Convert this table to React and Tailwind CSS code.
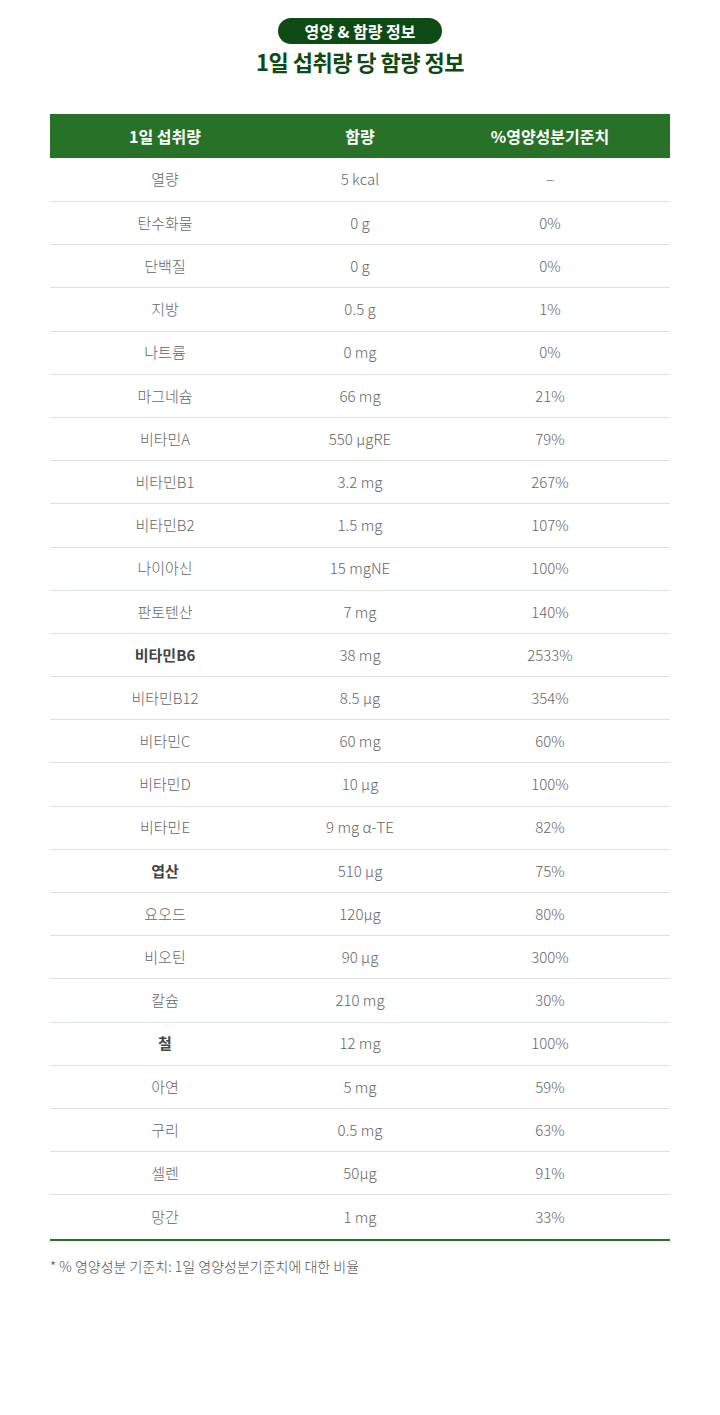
import React from 'react';

const rows = [
  ['열량', '5 kcal', '–'],
  ['탄수화물', '0 g', '0%'],
  ['단백질', '0 g', '0%'],
  ['지방', '0.5 g', '1%'],
  ['나트륨', '0 mg', '0%'],
  ['마그네슘', '66 mg', '21%'],
  ['비타민A', '550 μgRE', '79%'],
  ['비타민B1', '3.2 mg', '267%'],
  ['비타민B2', '1.5 mg', '107%'],
  ['나이아신', '15 mgNE', '100%'],
  ['판토텐산', '7 mg', '140%'],
  ['비타민B6', '38 mg', '2533%', true],
  ['비타민B12', '8.5 μg', '354%'],
  ['비타민C', '60 mg', '60%'],
  ['비타민D', '10 μg', '100%'],
  ['비타민E', '9 mg α-TE', '82%'],
  ['엽산', '510 μg', '75%', true],
  ['요오드', '120µg', '80%'],
  ['비오틴', '90 μg', '300%'],
  ['칼슘', '210 mg', '30%'],
  ['철', '12 mg', '100%', true],
  ['아연', '5 mg', '59%'],
  ['구리', '0.5 mg', '63%'],
  ['셀렌', '50µg', '91%'],
  ['망간', '1 mg', '33%'],
];

const font = { fontFamily: '"Noto Sans CJK KR", "Noto Sans", sans-serif' };

export default function App() {
  return (
    <div className="w-[720px] min-h-[1415px] bg-white" style={font}>
      {/* title */}
      <div className="flex flex-col items-center pt-[18px]">
        <div className="h-[26px] w-[164px] rounded-full bg-[#0e4a13] flex items-center justify-center text-white text-[16px] font-bold leading-none">
          영양 &amp; 함량 정보
        </div>
        <h1 className="mt-[2px] text-[22px] font-bold text-[#0e4a13] leading-[30px] tracking-[-0.5px]">
          1일 섭취량 당 함량 정보
        </h1>
      </div>

      {/* table */}
      <div className="mx-[50px] mt-[38px] border-b-2 border-[#2a6f2a]">
        <div className="grid grid-cols-[230px_160px_1fr] pr-[10px] h-[44px] items-center bg-[#277228] text-white text-[16px] font-bold">
          <div className="text-center">1일 섭취량</div>
          <div className="text-center">함량</div>
          <div className="text-center">%영양성분기준치</div>
        </div>
        {rows.map(([name, amount, pct, bold], i) => (
          <div
            key={name}
            className={`grid grid-cols-[230px_160px_1fr] pr-[10px] items-center text-[15px] text-[#666] font-light ${
              i === 0 ? 'h-[44px]' : 'h-[43.2px]'
            } ${i < rows.length - 1 ? 'border-b border-[#dbe5db]' : ''}`}
          >
            <div className={`text-center ${bold ? 'font-semibold text-[#444]' : ''}`}>{name}</div>
            <div className="text-center">{amount}</div>
            <div className="text-center">{pct}</div>
          </div>
        ))}
      </div>

      <p className="mx-[50px] mt-[15px] text-[14px] text-[#555] font-light">
        * % 영양성분 기준치: 1일 영양성분기준치에 대한 비율
      </p>
    </div>
  );
}
